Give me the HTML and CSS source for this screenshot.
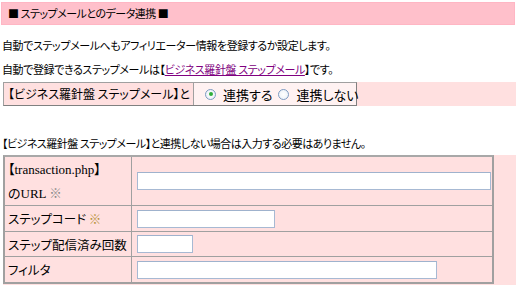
FILE: index.html
```html
<!DOCTYPE html>
<html lang="ja">
<head>
<meta charset="utf-8">
<link rel="stylesheet" href="styles.css">
</head>
<body>
<div class="header">■ ステップメールとのデータ連携 ■</div>
<div class="intro">
  <div class="line">自動でステップメールへもアフィリエーター情報を登録するか設定します。</div>
  <div class="line">自動で登録できるステップメールは【<a class="link" href="#">ビジネス羅針盤 ステップメール</a>】です。</div>
</div>
<div class="link-row">
  <div class="link-table">
    <div class="link-label">【ビジネス羅針盤 ステップメール】と</div>
    <div class="link-options">
      <span class="radio checked"></span><span class="opt">連携する</span>
      <span class="radio"></span><span class="opt">連携しない</span>
    </div>
  </div>
</div>
<div class="note">【ビジネス羅針盤 ステップメール】と連携しない場合は入力する必要はありません。</div>
<div class="form-wrap">
  <div class="form-table">
    <div class="cell label tall"><span class="serif">【transaction.php】</span><span><span class="serif">のURL</span> <span class="mark gray">※</span></span></div>
    <div class="cell value tall"><span class="input w-url"></span></div>
    <div class="cell label"><span>ステップコード <span class="mark">※</span></span></div>
    <div class="cell value"><span class="input w-code"></span></div>
    <div class="cell label"><span>ステップ配信済み回数</span></div>
    <div class="cell value"><span class="input w-count"></span></div>
    <div class="cell label"><span>フィルタ</span></div>
    <div class="cell value"><span class="input w-filter"></span></div>
  </div>
</div>
</body>
</html>
```
FILE: styles.css
```css
html, body {
  margin: 0;
  padding: 0;
  background: #ffffff;
}
body {
  font-family: "Noto Sans CJK JP", "Noto Sans", sans-serif;
  font-size: 12px;
  font-feature-settings: "palt";
  color: #000000;
  padding-top: 2px;
}
.header {
  margin: 0 3px 0 1px;
  height: 23px;
  line-height: 23px;
  padding-left: 7px;
  background: #ffc0cb;
  box-shadow: inset 0 0 0 1px #ffb6c4;
  white-space: nowrap;
  font-size: 11px;
  letter-spacing: -0.5px;
}
.intro {
  padding-top: 8px;
}
.line {
  height: 24px;
  line-height: 24px;
  padding-left: 2px;
  white-space: nowrap;
  font-size: 11px;
  letter-spacing: -0.4px;
}
.link {
  color: #800080;
  text-decoration: underline;
}
.link-row {
  margin: 1px 2px 0 3px;
  background: #ffe0e0;
  display: flex;
}
.link-table {
  display: flex;
  flex-shrink: 0;
  border: 1px solid #a0a0a0;
  border-right-color: #808080;
  border-bottom-color: #808080;
}
.link-label {
  width: 190px;
  flex-shrink: 0;
  height: 22px;
  line-height: 22px;
  padding-left: 4px;
  box-sizing: border-box;
  border-right: 1px solid #a0a0a0;
  white-space: nowrap;
}
.link-options {
  display: flex;
  align-items: center;
  flex-shrink: 0;
  width: 162px;
  height: 22px;
  padding-left: 11px;
  box-sizing: border-box;
  background: #fff2f2;
  white-space: nowrap;
}
.radio {
  width: 11px;
  height: 11px;
  flex-shrink: 0;
  border-radius: 50%;
  border: 1px solid #7d9bc2;
  box-sizing: border-box;
  background: radial-gradient(circle, #ffffff 0%, #e8eef6 100%);
  margin-right: 7px;
  display: flex;
  align-items: center;
  justify-content: center;
}
.radio.checked::after {
  content: "";
  width: 4px;
  height: 4px;
  border-radius: 50%;
  background: #2fae3a;
}
.opt {
  font-size: 13px;
  margin-right: 6px;
}
.note {
  margin-top: 25px;
  height: 24px;
  line-height: 24px;
  padding-left: 2px;
  white-space: nowrap;
  font-size: 11px;
  letter-spacing: -0.5px;
}
.form-wrap {
  margin: 0 2px 0 3px;
  background: #ffe0e0;
  padding-bottom: 2px;
}
.form-table {
  width: 491px;
  display: grid;
  grid-template-columns: 127px 1fr;
  grid-template-rows: 49px 26px 25px 25px;
  border: 2px solid #a0a0a0;
  border-top-color: #a8a8a8;
  box-sizing: border-box;
}
.cell {
  box-sizing: border-box;
  display: flex;
  align-items: center;
  border-bottom: 1px solid #a0a0a0;
}
.cell:nth-last-child(-n+2) {
  border-bottom: none;
}
.label {
  padding-left: 3px;
  border-right: 1px solid #a0a0a0;
  white-space: nowrap;
  font-size: 12.5px;
}
.label.tall {
  flex-direction: column;
  align-items: flex-start;
  justify-content: center;
  line-height: 23px;
}
.serif {
  font-family: "Liberation Serif", "Noto Sans CJK JP", serif;
  font-size: 13px;
}
.mark {
  color: #b8943c;
}
.mark.gray {
  color: #888888;
}
.value {
  padding-left: 5px;
}
.input {
  display: block;
  height: 18px;
  box-sizing: border-box;
  background: #ffffff;
  border: 1px solid #a7b9d3;
  border-top-color: #9fb2cd;
}
.w-url { width: 354px; }
.w-code { width: 138px; }
.w-count { width: 56px; }
.w-filter { width: 300px; }
```
